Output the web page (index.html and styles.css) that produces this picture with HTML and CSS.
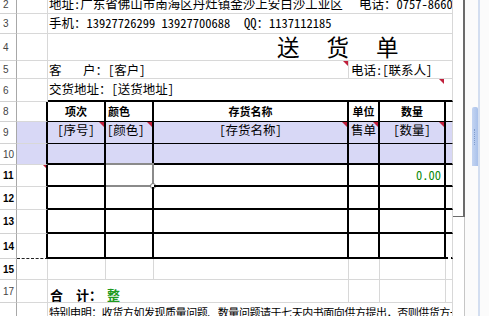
FILE: index.html
```html
<!DOCTYPE html>
<html lang="zh-CN">
<head>
<meta charset="utf-8">
<title>送货单</title>
<link rel="stylesheet" href="styles.css">
</head>
<body>
<div class="screen">
  <div class="sheet">
    <!-- row 2 -->
    <div class="rh">2</div><div class="c"></div>
    <div class="c s6 clip pl1"><span class="w310">地址:广东省佛山市南海区丹灶镇金沙上安白沙工业区</span><span>电话：0757-8660</span></div>
    <!-- row 3 -->
    <div class="rh">3</div><div class="c"></div>
    <div class="c s6 clip pl1"><span class="w195">手机：13927726299 13927700688</span><span>QQ：1137112185</span></div>
    <!-- row 4 -->
    <div class="rh">4</div><div class="c"></div>
    <div class="c s6 title"><span class="tt">送</span><span class="tt">货</span><span class="tt">单</span></div>
    <!-- row 5 -->
    <div class="rh">5</div><div class="c"></div>
    <div class="c s3 pl1 lower"><span class="k1">客</span>户：[客户]<i class="tri"></i></div>
    <div class="c s3 pl2 lower">电话:[联系人]</div>
    <!-- row 6 -->
    <div class="rh">6</div><div class="c"></div>
    <div class="c s6 pl1 top">交货地址：[送货地址]<i class="tri tri-f"></i></div>
    <!-- row 8 -->
    <div class="rh">8</div><div class="c ta"></div>
    <div class="c t thin hd ctr">项次</div>
    <div class="c t thin hd pl2">颜色</div>
    <div class="c t thin hd ctr">存货名称</div>
    <div class="c t thin hd ctr">单位</div>
    <div class="c t thin hd ctr">数量</div>
    <div class="c tg thin"></div>
    <!-- row 9 -->
    <div class="rh">9</div><div class="c ta lav"></div>
    <div class="c t thin lav ctr up">[序号]<i class="tri"></i></div>
    <div class="c t thin lav pl1 up">[颜色]<i class="tri"></i></div>
    <div class="c t thin lav ctr up">[存货名称]<i class="tri"></i></div>
    <div class="c t thin lav ctr up">售单<i class="tri"></i></div>
    <div class="c t thin lav ctr up">[数量]<i class="tri"></i></div>
    <div class="c tg thin lav"></div>
    <!-- row 10 -->
    <div class="rh">10</div><div class="c ta lav"></div>
    <div class="c t lav"></div>
    <div class="c t lav"></div>
    <div class="c t lav"></div>
    <div class="c t lav"></div>
    <div class="c t lav"></div>
    <div class="c tg lav"></div>
    <!-- row 11 -->
    <div class="rh b">11</div><div class="c ta"><i class="tri tri-s"></i></div>
    <div class="c t"></div>
    <div class="c t"><span class="sel"><span class="handle"></span></span></div>
    <div class="c t"></div>
    <div class="c t"></div>
    <div class="c t num">0.00</div>
    <div class="c tg"></div>
    <!-- row 12 -->
    <div class="rh b">12</div><div class="c ta"></div>
    <div class="c t"></div><div class="c t"></div><div class="c t"></div><div class="c t"></div><div class="c t"></div>
    <div class="c tg"></div>
    <!-- row 13 -->
    <div class="rh b">13</div><div class="c ta"></div>
    <div class="c t"></div><div class="c t"></div><div class="c t"></div><div class="c t"></div><div class="c t"></div>
    <div class="c tg"></div>
    <!-- row 14 -->
    <div class="rh b">14</div><div class="c ta pb"></div>
    <div class="c t"></div><div class="c t"></div><div class="c t"></div><div class="c t"></div><div class="c t"></div>
    <div class="c tg pb"></div>
    <!-- row 15 -->
    <div class="rh b">15</div><div class="c"></div>
    <div class="c"></div><div class="c"></div><div class="c"></div><div class="c"></div><div class="c"></div><div class="c"></div>
    <!-- row 17 -->
    <div class="rh">17</div><div class="c"></div>
    <div class="c s3 total"><span class="w59">合　计：</span><span class="green">整</span></div>
    <div class="c"></div><div class="c"></div><div class="c"></div>
    <!-- row 18 -->
    <div class="rh"></div><div class="c"></div>
    <div class="c s6 clip pl1 note">特别申明：收货方如发现质量问题、数量问题请于七天内书面向供方提出，否则供货方一律不予受理。</div>
  </div>
  <div class="frame">
    <div class="win"><div class="win-top"></div><div class="win-bot"></div></div>
    <div class="gap"></div>
    <div class="track"><div class="thumb"><span class="grip"></span></div></div>
    <div class="rail"></div>
    <div class="rest"></div>
  </div>
</div>
</body>
</html>
```

FILE: styles.css
```css
* { box-sizing: border-box; margin: 0; padding: 0; }
html, body { width: 489px; height: 316px; overflow: hidden; background: #fff; }
body {
  font-family: "Noto Sans Mono CJK SC", "Noto Sans CJK SC", sans-serif;
  font-size: 12.5px;
  line-height: 1;
  color: #000;
}
.screen { display: flex; height: 316px; overflow: hidden; }

.sheet {
  flex: 0 0 453px;
  align-self: flex-start;
  margin-top: -4px;
  display: grid;
  grid-template-columns: 17px 31px 58px 48px 195px 31px 66px 7px;
  grid-template-rows: 18px 20px 27px 18px 23px 20px 22px 21px 22px 23px 24px 25px 21px 23px 22px;
}

/* row headers */
.rh {
  border-right: 1px solid #a8a8a8;
  border-bottom: 1px solid #d2d2d2;
  background: #fff;
  display: flex;
  align-items: center;
  padding-left: 3px;
  font: 10px "Liberation Sans", Arial, sans-serif;
  color: #444;
}
.rh.b { font-weight: bold; color: #000; }

/* cells */
.c {
  position: relative;
  min-width: 0;
  display: flex;
  align-items: center;
  white-space: nowrap;
  border-right: 1px solid #d8d8d8;
  border-bottom: 1px solid #d8d8d8;
}
.s6 { grid-column: span 6; }
.s3 { grid-column: span 3; }
.clip { overflow: hidden; }
.pl1 { padding-left: 1px; }
.pl2 { padding-left: 2px; }
.ctr { justify-content: center; }
.lower { padding-top: 2px; }
.up { padding-bottom: 4px; }
.w310 { flex: 0 0 310px; }
.w195 { flex: 0 0 195px; }
.w59 { flex: 0 0 59px; padding-left: 2px; }
.k1 { margin-right: 21.5px; }

.title {
  padding-left: 229px;
  padding-bottom: 2px;
  gap: 27px;
  font-size: 22.5px;
  font-weight: 500;
}
.tt { line-height: 22px; }

.top { border-bottom: 2px solid #000; }

/* bordered table */
.ta { border-right: 2px solid #000; }
.t { border-right: 2px solid #000; border-bottom: 2px solid #000; }
.tg { border-bottom: 2px solid #000; }
.t.thin, .tg.thin { border-bottom-width: 1px; }
.ta.pb { border-bottom: 1px dashed #222; }
.tg.pb { border-bottom: 2px dotted #000; }
.lav { background: #d8d8f6; }

.hd {
  font-family: "Noto Sans CJK SC", sans-serif;
  font-weight: bold;
  font-size: 11px;
}

.num {
  justify-content: flex-end;
  padding-right: 3px;
  color: #0b8a0b;
}

/* comment indicators */
.tri {
  position: absolute;
  top: 0;
  right: 0;
  width: 0;
  height: 0;
  border-top: 5px solid #c0203c;
  border-left: 5px solid transparent;
}
.tri-f { right: 8px; }
.tri-s { border-top-width: 3px; border-left-width: 3px; }

/* active cell selection */
.sel {
  position: absolute;
  left: 0;
  top: -2px;
  width: 48px;
  height: 24px;
  border: 2px solid #8a8a8a;
  border-left: none;
}
.handle {
  position: absolute;
  right: -4px;
  bottom: -4px;
  width: 6px;
  height: 6px;
  border-radius: 50%;
  background: #fff;
  border: 1px solid #777;
}

.total {
  padding-top: 6px;
  font-family: "Noto Sans CJK SC", sans-serif;
  font-weight: bold;
  font-size: 13px;
}
.green { color: #1f9a1f; }

.note {
  align-items: flex-start;
  padding-top: 4px;
  font-size: 11px;
  letter-spacing: -0.45px;
}

/* right-hand window edge and scrollbar */
.frame { flex: 1; display: flex; background: #fbfbfb; }
.win { width: 12px; display: flex; flex-direction: column; background: #fff; }
.win-top { height: 217px; border-right: 2px solid #6b6b6b; border-bottom: 1px solid #6b6b6b; }
.win-bot { flex: 1; border-right: 1px solid #c6c6c6; }
.gap { width: 7px; }
.track { width: 6px; padding-top: 107px; }
.thumb {
  height: 59px;
  border-radius: 2px 2px 0 0;
  background: linear-gradient(90deg, #c4d5f2, #a9c1ea);
  display: flex;
  align-items: center;
  justify-content: center;
}
.grip { width: 2px; height: 16px; border-left: 1px dotted #7f9ccc; }
.rail { width: 2px; background: #d3def0; }
.rest { flex: 1; }
```
